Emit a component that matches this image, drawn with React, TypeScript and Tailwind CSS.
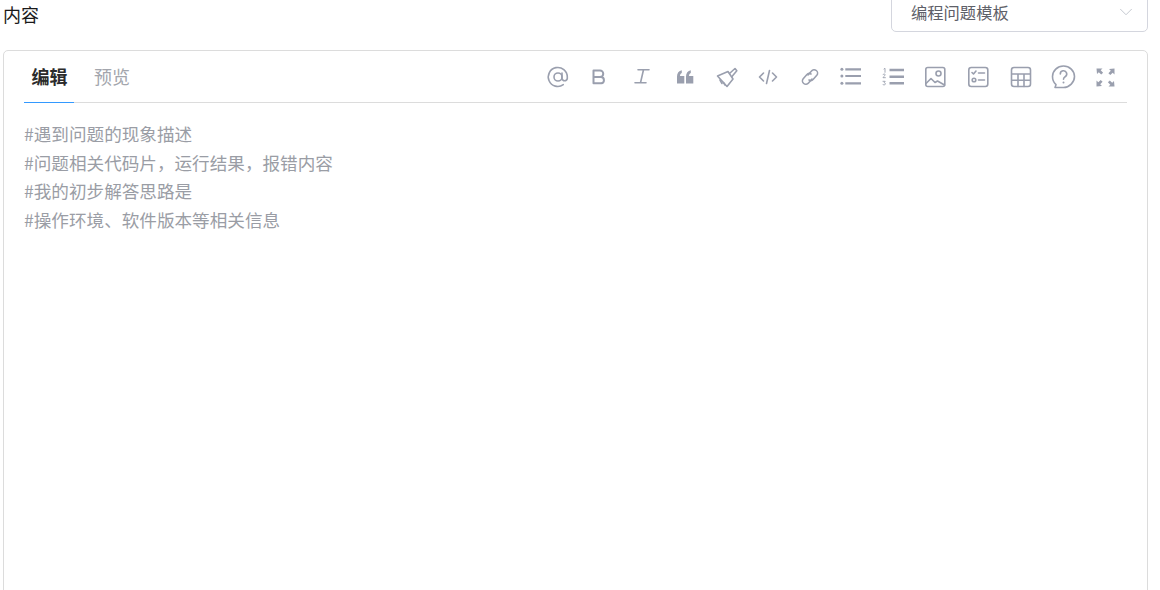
import React from "react";
import { ChevronDown } from "lucide-react";

const lines = [
    "#遇到问题的现象描述",
    "#问题相关代码片，运行结果，报错内容",
    "#我的初步解答思路是",
    "#操作环境、软件版本等相关信息",
];

const stroke = { fill: "none", stroke: "#9a9fae", strokeWidth: 1.6, strokeLinecap: "round" as const, strokeLinejoin: "round" as const };

const icons: React.ReactNode[] = [
    <g {...stroke} key="at" transform="translate(1 0)"><circle cx="11" cy="11" r="4" /><path d="M15 7v5.5a2.700 2.700 0 0 0 5.300 0V11a9.500 9.500 0 1 0-4 7.700" /></g>,
    <path {...stroke} strokeWidth={2} key="b" d="M5.500 4.500h6.500a3.200 3.200 0 0 1 0 6.500H5.500zM5.500 11h7.800a3.200 3.200 0 0 1 0 6.300H5.500z" />,
    <path {...stroke} key="i" d="M8 3.800h11M13.500 3.800L10.500 16.800M5 16.800h11" />,
    <path key="q" fill="#9a9fae" d="M4 17.500v-7c0-3.400 1.800-5.600 4.800-6.200v2.600C7.500 7.400 7 8.400 7 10h4.300v7.500zM13 17.500v-7c0-3.400 1.800-5.600 4.800-6.200v2.600c-1.300.5-1.800 1.500-1.800 3.100h4.300v7.500z" />,
    <g {...stroke} key="brush"><path d="M2.500 10L13 5.500l5 7.500-6 7.500z" /><path d="M7 17.500l-2-3.500M10 19l-1.500-2.500" /><path d="M14.500 7.500l5.500-5 1.800 2.300-4.800 5.700" /></g>,
    <path {...stroke} key="code" d="M6.500 7L2.500 11l4 4M15.500 7l4 4-4 4M12.500 4.500L9.500 17.500" />,
    <g {...stroke} key="link"><path d="M9 9l3.500-4a3.400 3.400 0 0 1 5.300 4.300l-3.500 4a3.400 3.400 0 0 1-4.300.7" /><path d="M13 13l-3.500 4a3.400 3.400 0 0 1-5.300-4.300l3.500-4a3.400 3.400 0 0 1 4.300-.7" /></g>,
    <g key="ul"><circle cx="0.900" cy="3.300" r="1.500" fill="#9a9fae" /><circle cx="0.900" cy="10" r="1.500" fill="#9a9fae" /><circle cx="0.900" cy="17.300" r="1.500" fill="#9a9fae" /><path {...stroke} strokeWidth={2.200} strokeLinecap="butt" d="M4.300 3.300H20M4.300 10H20M4.300 17.300H20" /></g>,
    <g key="ol"><path {...stroke} strokeWidth={2.400} strokeLinecap="butt" d="M6.500 4H21M6.500 10.700H21M6.500 17.300H21" /><path {...stroke} strokeWidth={0.9} d="M1 3l1-.7v4M0 8.700c.3-1 2.200-1 2.200.2 0 .8-2.200 1.800-2.200 2.800h2.400M0 15.300h2.200l-1 1.300c1.500 0 1.500 2.400-.2 2.400-.5 0-.9-.2-1-.5" /></g>,
    <g {...stroke} key="img"><rect x="0.800" y="1.500" width="19" height="19" rx="2" /><circle cx="13.500" cy="7.500" r="2.500" /><path d="M1 17.500l5-5 4 4 2.500-1.500 7 4" /></g>,
    <g {...stroke} key="task"><rect x="0.800" y="1.500" width="19" height="19" rx="2.500" /><path d="M4 6.500l1.500 1.500L8 5M10.500 7H16.500M10.500 14H16.500" /><circle cx="6" cy="14" r="1.800" /></g>,
    <g {...stroke} key="table"><rect x="1.500" y="1.500" width="19" height="19" rx="2.500" /><path d="M2 8h18M2 14.300h18M8 8v12.500M14 8v12.500" /></g>,
    <g {...stroke} key="help"><path d="M11.500 0c6 0 11 4.800 11 10.500S17.500 21.500 11.500 21.500H3l1-2.800C1.800 16.700.5 14 .5 10.500.5 4.800 5.500 0 11.500 0z" /><path d="M8.300 8a3.200 3.200 0 1 1 4.800 2.700c-1 .6-1.600 1.200-1.600 2.600" /><path strokeWidth={2} d="M11.500 16.500v.1" /></g>,
    <g key="full"><path fill="#9a9fae" d="M2.500 2.500h6L6.700 4.300l2.400 2.400-1.900 1.900-2.400-2.400-1.800 1.800zM20.500 2.500v6l-1.800-1.800-2.400 2.400-1.900-1.900 2.400-2.400-1.800-1.800zM2.500 20.500v-6l1.800 1.800 2.400-2.400 1.900 1.900-2.400 2.400 1.800 1.800zM20.500 20.500h-6l1.800-1.800-2.400-2.400 1.900-1.900 2.400 2.400 1.800-1.800z" /></g>,
];

export default function App() {
    return (
        <div className="h-[590px] overflow-hidden bg-white pl-[3px] pr-3 font-['Noto_Sans_CJK_SC','Liberation_Sans',sans-serif]">
            <div className="-mt-2 flex items-start justify-between">
                <label className="mt-[6px] text-[18px] leading-[32px] text-[#1a1a1a]">内容</label>
                <div className="flex h-[40px] w-[257px] items-center justify-between rounded-[5px] border border-[#d4d6de] pl-[19px] pr-[10px]">
                    <span className="text-[16.300px] text-[#5e6068]">编程问题模板</span>
                    <ChevronDown size={22} strokeWidth={1} className="text-[#c0c4cc]" />
                </div>
            </div>
            <div className="mt-[18px] h-[600px] rounded-[5px] border border-[#dcdcdc] px-5 pt-[5px]">
                <div className="flex h-[47px] justify-between border-b border-[#dcdcdc]">
                    <div className="flex h-full text-[18px]">
                        <div className="-mb-px h-[47px] w-[50px] border-b border-[#3399ff] pl-[1px] pt-[7px] text-center font-bold leading-[26px] text-[#2b2b2b]">编辑</div>
                        <div className="ml-5 pt-[7px] leading-[26px] text-[#a3a6ad]">预览</div>
                    </div>
                    <div className="mr-[11px] flex h-[22px] translate-y-[10px] items-center gap-[20.150px]">
                        {icons.map((icon, i) => (
                            <svg key={i} width="22" height="22" viewBox="0 0 22 22" className="overflow-visible">{icon}</svg>
                        ))}
                    </div>
                </div>
                <div className="mt-[17px] text-[17.600px] leading-[28.500px] text-[#9a9da5]">
                    {lines.map((line) => (
                        <div key={line}>{line}</div>
                    ))}
                </div>
            </div>
        </div>
    );
}
